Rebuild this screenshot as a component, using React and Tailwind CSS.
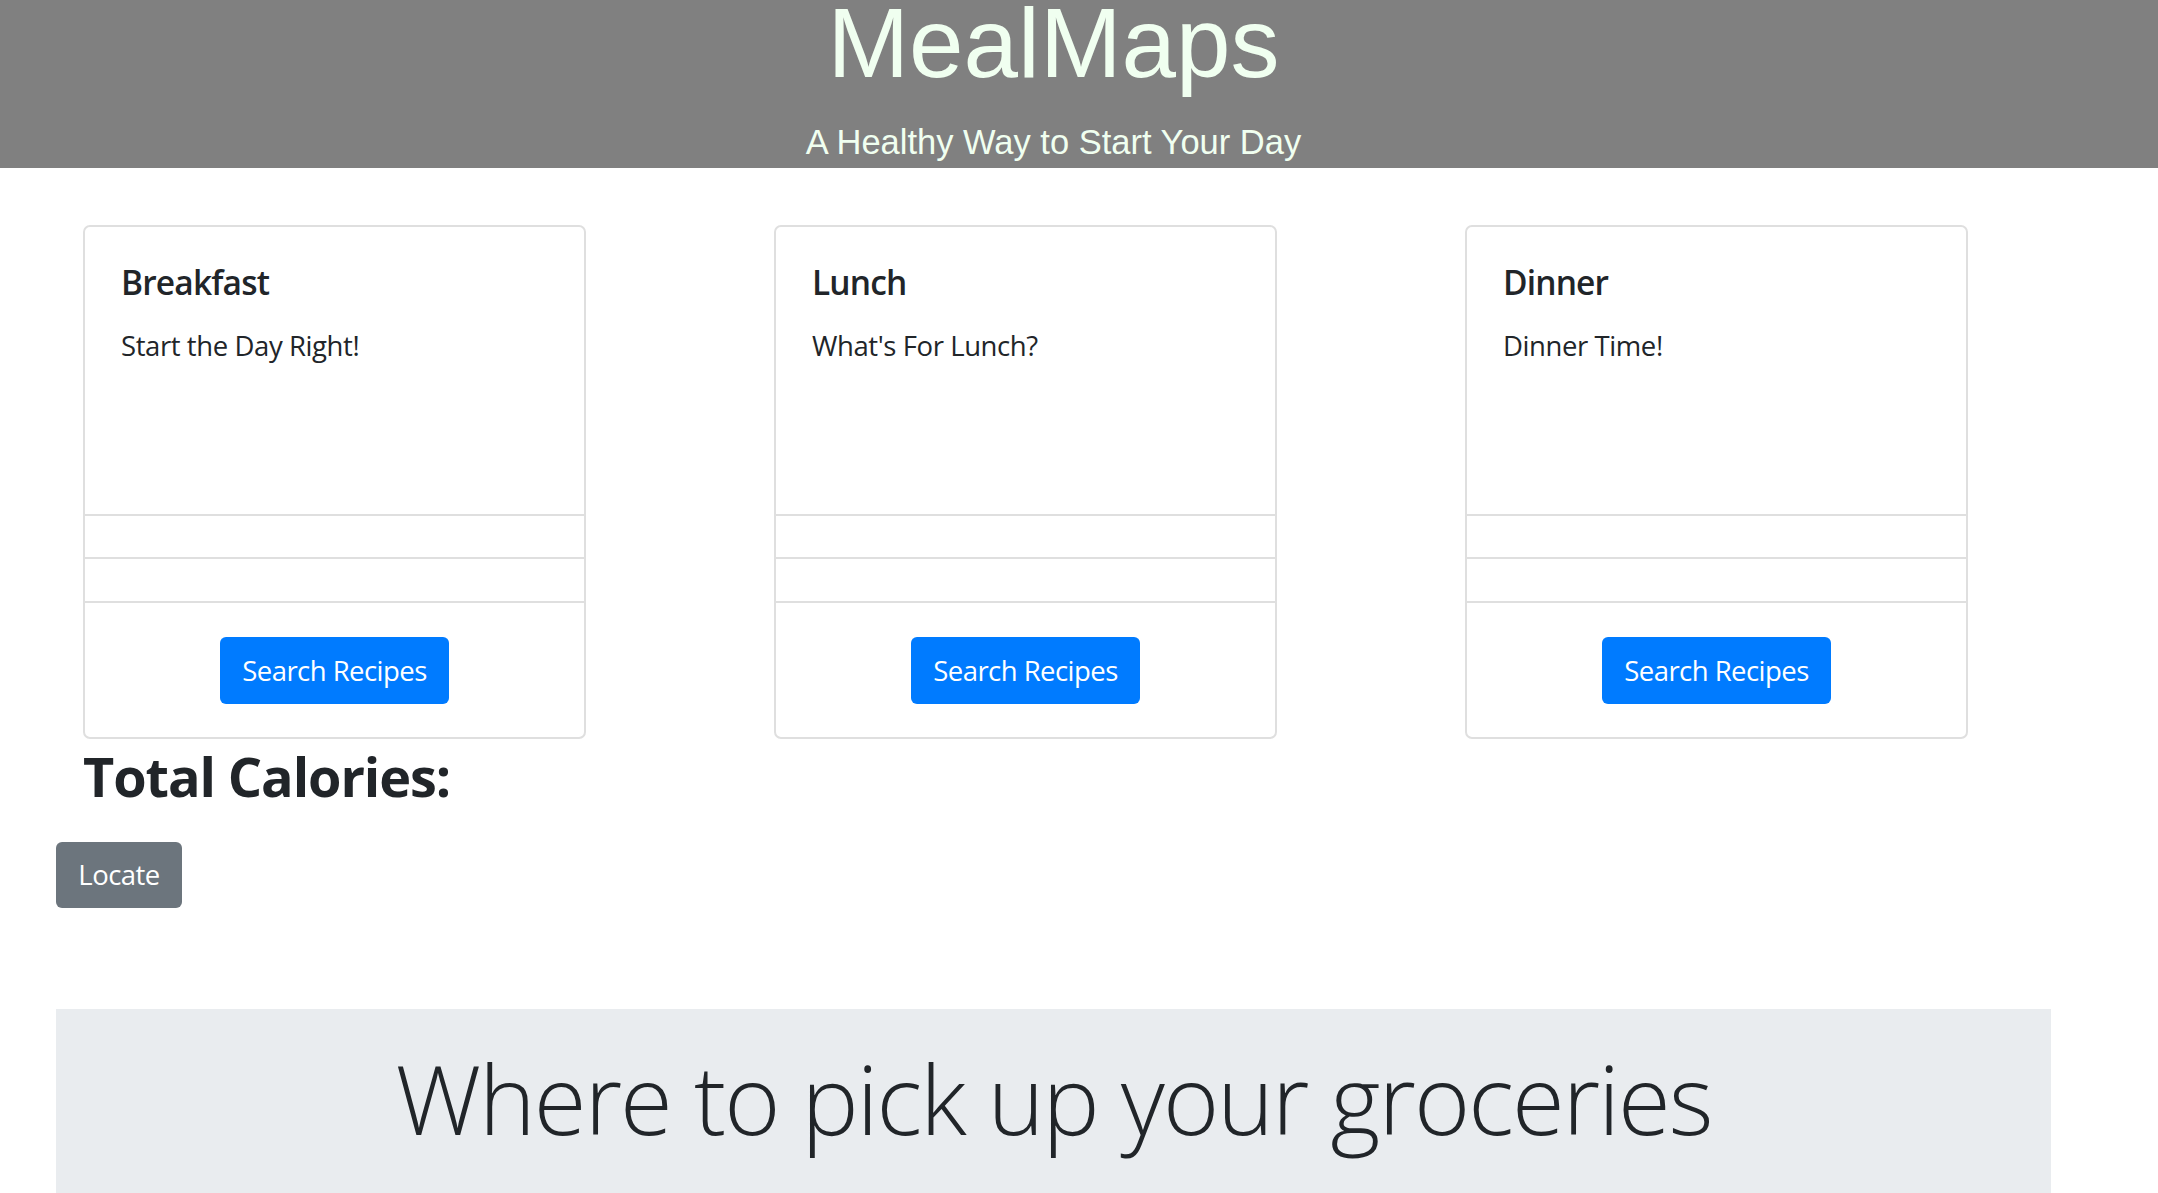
import React from "react";

const meals = [
  { title: "Breakfast", text: "Start the Day Right!" },
  { title: "Lunch", text: "What's For Lunch?" },
  { title: "Dinner", text: "Dinner Time!" },
];

const font = { fontFamily: '"Open Sans", "Noto Sans", sans-serif' };

const MealCard = ({ title, text }) => (
  <div className="flex w-[503px] flex-col overflow-hidden rounded-[7px] border-2 border-[#dfdfdf] bg-white">
    <div className="h-[287px] px-[36px] pt-[34px]">
      <h5 className="text-[33.5px] font-semibold leading-[43px] tracking-[-0.025em] text-[#212529]">{title}</h5>
      <p className="mt-[20px] text-[27.5px] leading-[43px] tracking-[-0.015em] text-[#212529]">{text}</p>
    </div>
    <div className="h-[43px] border-t-2 border-[#dfdfdf]" />
    <div className="h-[44px] border-t-2 border-[#dfdfdf]" />
    <div className="flex justify-center border-t-2 border-[#dfdfdf] pb-[33px] pt-[34px]">
      <button className="flex h-[67px] w-[229px] items-center justify-center rounded-[6px] bg-[#007bff] text-[27.5px] tracking-[-0.02em] text-white">
        Search Recipes
      </button>
    </div>
  </div>
);

export default function App() {
  return (
    <div className="min-h-screen bg-white" style={font}>
      <header
        className="flex h-[168px] flex-col items-center overflow-hidden bg-[#808080] pl-[56px] pr-[107px] text-[#f0fff0]"
        style={{ fontFamily: '"Liberation Sans", Arial, sans-serif' }}
      >
        <h1 className="mt-[-6px] text-[98px] leading-none">MealMaps</h1>
        <p className="mt-[33px] text-[34.5px] leading-none">A Healthy Way to Start Your Day</p>
      </header>

      <main className="px-[56px] pt-[57px]">
        <div className="grid grid-cols-[691px_691px_691px]">
          {meals.map(m => (
            <div key={m.title} className="px-[27px]">
              <MealCard {...m} />
            </div>
          ))}
        </div>

        <h2 className="mt-[2px] pl-[27px] text-[54px] font-bold leading-[70px] tracking-[-0.02em] text-[#212529]">Total Calories:</h2>

        <button className="mt-[31px] flex h-[66px] w-[126px] items-center justify-center rounded-[6px] bg-[#6c757d] text-[27.5px] tracking-[-0.02em] text-white">
          Locate
        </button>

        <section className="mt-[101px] w-[1995px] bg-[#e9ecef] pb-[120px] pt-[28px] text-center">
          <h1 className="text-[96px] font-light leading-[121px] tracking-[-0.02em] text-[#212529]">Where to pick up your groceries</h1>
        </section>
      </main>
    </div>
  );
}
